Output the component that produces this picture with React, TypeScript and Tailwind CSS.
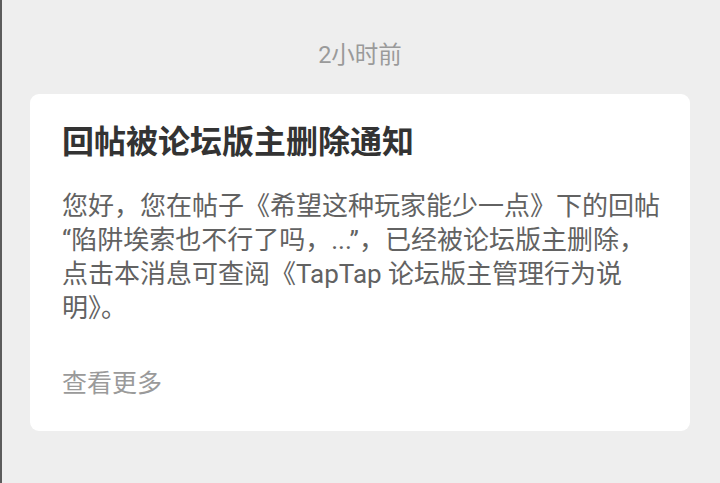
export default function App() {
  return (
    <div
      className="min-h-[483px] w-full bg-[#eeeeee] border-l-2 border-[#5c5c5c] pt-[40px] pl-[28px] pr-[30px]"
      style={{ fontFamily: 'Roboto, "Noto Sans CJK SC", sans-serif' }}
    >
      <div className="text-center text-[23.5px] leading-[30px] text-[#9a9a9a]">2小时前</div>
      <div className="mt-[24px] rounded-[9px] bg-white pl-[32px] pr-[20px] pt-[28px] pb-[30px]">
        <h1 className="text-[32px] leading-[40px] font-bold text-[#333333]">回帖被论坛版主删除通知</h1>
        <p className="mt-[27px] text-[26px] leading-[34px] text-[#626262] whitespace-nowrap">
          您好，您在帖子《希望这种玩家能少一点》下的回帖
          <br />
          “陷阱埃索也不行了吗，...”，已经被论坛版主删除，
          <br />
          点击本消息可查阅《TapTap 论坛版主管理行为说
          <br />
          明》。
        </p>
        <div className="mt-[42px] text-[25px] leading-[34px] text-[#9a9a9a]">查看更多</div>
      </div>
    </div>
  );
}
